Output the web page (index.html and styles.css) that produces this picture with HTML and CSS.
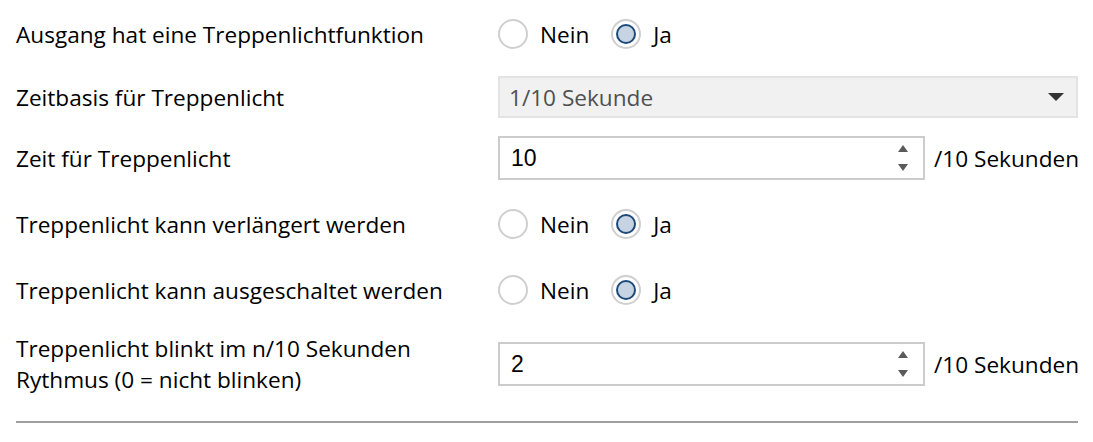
FILE: index.html
```html
<!DOCTYPE html>
<html lang="de">
<head>
<meta charset="utf-8">
<link rel="stylesheet" href="styles.css">
</head>
<body>
<div class="form">
  <div class="row r1">
    <div class="label">Ausgang hat eine Treppenlichtfunktion</div>
    <div class="control radios">
      <span class="radio"></span><span class="opt">Nein</span>
      <span class="radio checked"></span><span class="opt">Ja</span>
    </div>
  </div>
  <div class="row r2">
    <div class="label">Zeitbasis für Treppenlicht</div>
    <div class="control">
      <div class="select"><span>1/10 Sekunde</span><span class="caret"></span></div>
    </div>
  </div>
  <div class="row r3">
    <div class="label">Zeit für Treppenlicht</div>
    <div class="control">
      <div class="spin"><span class="val">10</span><span class="arrows"><span class="up"></span><span class="down"></span></span></div>
      <span class="unit">/10 Sekunden</span>
    </div>
  </div>
  <div class="row r4">
    <div class="label">Treppenlicht kann verlängert werden</div>
    <div class="control radios">
      <span class="radio"></span><span class="opt">Nein</span>
      <span class="radio checked"></span><span class="opt">Ja</span>
    </div>
  </div>
  <div class="row r5">
    <div class="label">Treppenlicht kann ausgeschaltet werden</div>
    <div class="control radios">
      <span class="radio"></span><span class="opt">Nein</span>
      <span class="radio checked"></span><span class="opt">Ja</span>
    </div>
  </div>
  <div class="row r6">
    <div class="label">Treppenlicht blinkt im n/10 Sekunden<br>Rythmus (0 = nicht blinken)</div>
    <div class="control">
      <div class="spin"><span class="val">2</span><span class="arrows"><span class="up"></span><span class="down"></span></span></div>
      <span class="unit">/10 Sekunden</span>
    </div>
  </div>
  <div class="divider"></div>
</div>
</body>
</html>
```
FILE: styles.css
```css
html, body {
  margin: 0;
  padding: 0;
  background: #ffffff;
}
body {
  font-family: "Open Sans", "Noto Sans", sans-serif;
  font-size: 22.6px;
  color: #000;
}
.form {
  width: 1062px;
  padding: 16px 15px 0 16px;
  display: flex;
  flex-direction: column;
}
.row {
  display: flex;
  align-items: center;
}
.label {
  width: 482px;
  flex: none;
  line-height: 31px;
  white-space: nowrap;
}
.control {
  flex: 1;
  display: flex;
  align-items: center;
  white-space: nowrap;
}
.r1 { height: 36px; }
.r2 { height: 42px; margin-top: 24px; }
.r3 { height: 44px; margin-top: 18px; }
.r4 { height: 36px; margin-top: 26px; }
.r5 { height: 36px; margin-top: 30px; }
.r6 { height: 62px; margin-top: 25px; }
.radio {
  width: 30px;
  height: 30px;
  flex: none;
  box-sizing: border-box;
  border: 2px solid #cfcfcf;
  border-radius: 50%;
  display: flex;
  align-items: center;
  justify-content: center;
  background: #fff;
}
.radio.checked::after {
  content: "";
  width: 20px;
  height: 20px;
  box-sizing: border-box;
  border: 2px solid #1d4a7a;
  border-radius: 50%;
  background: #c5d3e2;
}
.opt { margin-left: 12px; margin-right: 22px; }
.select {
  width: 580px;
  height: 42px;
  box-sizing: border-box;
  background: #f1f1f1;
  border: 2px solid #e3e3e3;
  color: #505050;
  display: flex;
  align-items: center;
  justify-content: space-between;
  padding: 0 12px 0 9px;
}
.caret {
  width: 0;
  height: 0;
  border-left: 8px solid transparent;
  border-right: 8px solid transparent;
  border-top: 8px solid #333;
}
.spin {
  width: 427px;
  height: 44px;
  flex: none;
  box-sizing: border-box;
  border: 2px solid #cccccc;
  display: flex;
  align-items: center;
  justify-content: space-between;
  padding: 0 15px 0 11px;
}
.val {
  font-family: "Liberation Sans", Arial, sans-serif;
  font-size: 23px;
}
.arrows {
  display: flex;
  flex-direction: column;
  gap: 12px;
}
.up, .down {
  width: 0;
  height: 0;
  border-left: 5px solid transparent;
  border-right: 5px solid transparent;
}
.up { border-bottom: 7px solid #5a5a5a; }
.down { border-top: 7px solid #5a5a5a; }
.unit { margin-left: 9px; }
.divider {
  margin-top: 26px;
  height: 2px;
  background: #a0a0a0;
}
```
